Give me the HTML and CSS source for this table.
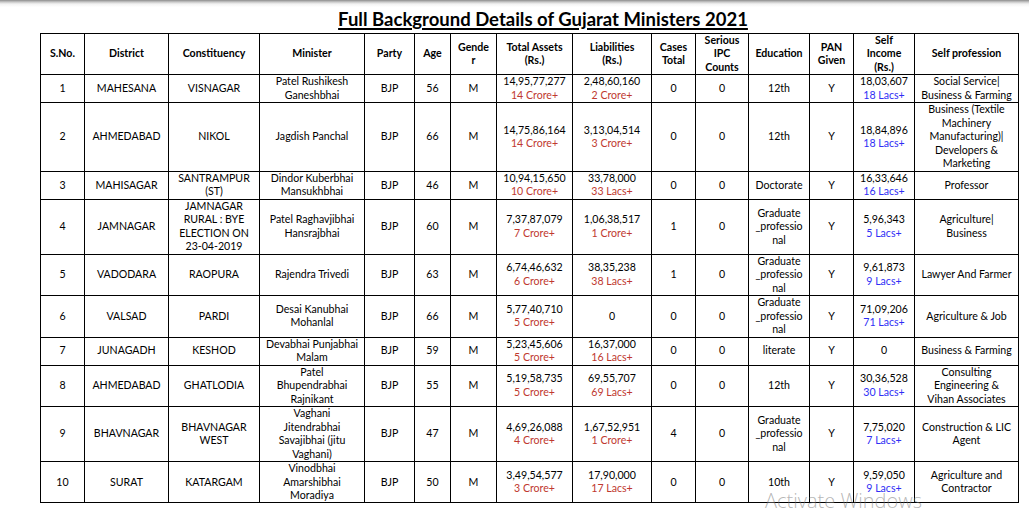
FILE: index.html
```html
<!DOCTYPE html>
<html>
<head>
<meta charset="utf-8">
<link rel="stylesheet" href="styles.css">
</head>
<body>
<div class="page">
  <h1 class="title">Full Background Details of Gujarat Ministers 2021</h1>
  <table class="grid">
    <colgroup>
      <col class="c-sno"><col class="c-district"><col class="c-const"><col class="c-min"><col class="c-party"><col class="c-age"><col class="c-gender"><col class="c-assets"><col class="c-liab"><col class="c-cases"><col class="c-ipc"><col class="c-edu"><col class="c-pan"><col class="c-income"><col class="c-prof">
    </colgroup>
    <thead>
      <tr>
        <th>S.No.</th><th>District</th><th>Constituency</th><th>Minister</th><th>Party</th><th>Age</th><th>Gende<br>r</th><th>Total Assets<br>(Rs.)</th><th>Liabilities<br>(Rs.)</th><th>Cases<br>Total</th><th>Serious<br>IPC<br>Counts</th><th>Education</th><th>PAN<br>Given</th><th>Self<br>Income<br>(Rs.)</th><th>Self profession</th>
      </tr>
    </thead>
    <tbody>
      <tr>
        <td>1</td><td>MAHESANA</td><td>VISNAGAR</td><td>Patel Rushikesh<br>Ganeshbhai</td><td>BJP</td><td>56</td><td>M</td>
        <td>14,95,77,277<br><span class="red">14 Crore+</span></td><td>2,48,60,160<br><span class="red">2 Crore+</span></td>
        <td>0</td><td>0</td><td>12th</td><td>Y</td><td>18,03,607<br><span class="blue">18 Lacs+</span></td><td>Social Service|<br>Business &amp; Farming</td>
      </tr>
      <tr>
        <td>2</td><td>AHMEDABAD</td><td>NIKOL</td><td>Jagdish Panchal</td><td>BJP</td><td>66</td><td>M</td>
        <td>14,75,86,164<br><span class="red">14 Crore+</span></td><td>3,13,04,514<br><span class="red">3 Crore+</span></td>
        <td>0</td><td>0</td><td>12th</td><td>Y</td><td>18,84,896<br><span class="blue">18 Lacs+</span></td><td>Business (Textile<br>Machinery<br>Manufacturing)|<br>Developers &amp;<br>Marketing</td>
      </tr>
      <tr>
        <td>3</td><td>MAHISAGAR</td><td>SANTRAMPUR<br>(ST)</td><td>Dindor Kuberbhai<br>Mansukhbhai</td><td>BJP</td><td>46</td><td>M</td>
        <td>10,94,15,650<br><span class="red">10 Crore+</span></td><td>33,78,000<br><span class="red">33 Lacs+</span></td>
        <td>0</td><td>0</td><td>Doctorate</td><td>Y</td><td>16,33,646<br><span class="blue">16 Lacs+</span></td><td>Professor</td>
      </tr>
      <tr>
        <td>4</td><td>JAMNAGAR</td><td>JAMNAGAR<br>RURAL : BYE<br>ELECTION ON<br>23-04-2019</td><td>Patel Raghavjibhai<br>Hansrajbhai</td><td>BJP</td><td>60</td><td>M</td>
        <td>7,37,87,079<br><span class="red">7 Crore+</span></td><td>1,06,38,517<br><span class="red">1 Crore+</span></td>
        <td>1</td><td>0</td><td>Graduate<br>_professio<br>nal</td><td>Y</td><td>5,96,343<br><span class="blue">5 Lacs+</span></td><td>Agriculture|<br>Business</td>
      </tr>
      <tr>
        <td>5</td><td>VADODARA</td><td>RAOPURA</td><td>Rajendra Trivedi</td><td>BJP</td><td>63</td><td>M</td>
        <td>6,74,46,632<br><span class="red">6 Crore+</span></td><td>38,35,238<br><span class="red">38 Lacs+</span></td>
        <td>1</td><td>0</td><td>Graduate<br>_professio<br>nal</td><td>Y</td><td>9,61,873<br><span class="blue">9 Lacs+</span></td><td>Lawyer And Farmer</td>
      </tr>
      <tr>
        <td>6</td><td>VALSAD</td><td>PARDI</td><td>Desai Kanubhai<br>Mohanlal</td><td>BJP</td><td>66</td><td>M</td>
        <td>5,77,40,710<br><span class="red">5 Crore+</span></td><td>0</td>
        <td>0</td><td>0</td><td>Graduate<br>_professio<br>nal</td><td>Y</td><td>71,09,206<br><span class="blue">71 Lacs+</span></td><td>Agriculture &amp; Job</td>
      </tr>
      <tr>
        <td>7</td><td>JUNAGADH</td><td>KESHOD</td><td>Devabhai Punjabhai<br>Malam</td><td>BJP</td><td>59</td><td>M</td>
        <td>5,23,45,606<br><span class="red">5 Crore+</span></td><td>16,37,000<br><span class="red">16 Lacs+</span></td>
        <td>0</td><td>0</td><td>literate</td><td>Y</td><td>0</td><td>Business &amp; Farming</td>
      </tr>
      <tr>
        <td>8</td><td>AHMEDABAD</td><td>GHATLODIA</td><td>Patel<br>Bhupendrabhai<br>Rajnikant</td><td>BJP</td><td>55</td><td>M</td>
        <td>5,19,58,735<br><span class="red">5 Crore+</span></td><td>69,55,707<br><span class="red">69 Lacs+</span></td>
        <td>0</td><td>0</td><td>12th</td><td>Y</td><td>30,36,528<br><span class="blue">30 Lacs+</span></td><td>Consulting<br>Engineering &amp;<br>Vihan Associates</td>
      </tr>
      <tr>
        <td>9</td><td>BHAVNAGAR</td><td>BHAVNAGAR<br>WEST</td><td>Vaghani<br>Jitendrabhai<br>Savajibhai (jitu<br>Vaghani)</td><td>BJP</td><td>47</td><td>M</td>
        <td>4,69,26,088<br><span class="red">4 Crore+</span></td><td>1,67,52,951<br><span class="red">1 Crore+</span></td>
        <td>4</td><td>0</td><td>Graduate<br>_professio<br>nal</td><td>Y</td><td>7,75,020<br><span class="blue">7 Lacs+</span></td><td>Construction &amp; LIC<br>Agent</td>
      </tr>
      <tr>
        <td>10</td><td>SURAT</td><td>KATARGAM</td><td>Vinodbhai<br>Amarshibhai<br>Moradiya</td><td>BJP</td><td>50</td><td>M</td>
        <td>3,49,54,577<br><span class="red">3 Crore+</span></td><td>17,90,000<br><span class="red">17 Lacs+</span></td>
        <td>0</td><td>0</td><td>10th</td><td>Y</td><td>9,59,050<br><span class="blue">9 Lacs+</span></td><td>Agriculture and<br>Contractor</td>
      </tr>
    </tbody>
  </table>
</div>
<div class="watermark">Activate Windows</div>
</body>
</html>
```
FILE: styles.css
```css
html, body {
  margin: 0;
  padding: 0;
}
body {
  background: #fff linear-gradient(#8c8c8c 0, #c8c8c8 2px, #f2f2f2 4px, #fff 7px) no-repeat;
  background-size: 100% 7px;
  font-family: Lato, "Liberation Sans", sans-serif;
  color: #000;
  width: 1029px;
  height: 511px;
  overflow: hidden;
  position: relative;
}
.page {
  padding: 9px 0 0 40px;
}
.title {
  margin: 0;
  width: 948px;
  padding-left: 29px;
  text-align: center;
  font-size: 18.5px;
  line-height: 20px;
  height: 24px;
  font-weight: 700;
  text-decoration: underline;
  text-underline-offset: 2px;
  text-decoration-thickness: 1.5px;
}
.grid {
  border-collapse: collapse;
  table-layout: fixed;
  width: 978px;
  font-size: 10.6px;
  line-height: 13.48px;
}
.grid th, .grid td {
  border: 1px solid #000;
  padding: 0;
  text-align: center;
  vertical-align: middle;
  white-space: nowrap;
  overflow: hidden;
}
.grid th {
  font-weight: 700;
}
.red { color: #c0392f; }
.blue { color: #2f2ff5; }
.c-sno { width: 44px; }
.c-district { width: 84px; }
.c-const { width: 91px; }
.c-min { width: 105px; }
.c-party { width: 50px; }
.c-age { width: 36px; }
.c-gender { width: 46px; }
.c-assets { width: 76px; }
.c-liab { width: 79px; }
.c-cases { width: 44px; }
.c-ipc { width: 53px; }
.c-edu { width: 61px; }
.c-pan { width: 44px; }
.c-income { width: 61px; }
.c-prof { width: 104px; }
.watermark {
  position: absolute;
  left: 765px;
  top: 488px;
  font-family: "Open Sans", "Noto Sans", sans-serif;
  font-weight: 300;
  font-size: 20px;
  line-height: 26px;
  color: rgba(120, 120, 120, 0.55);
  white-space: nowrap;
}
```
